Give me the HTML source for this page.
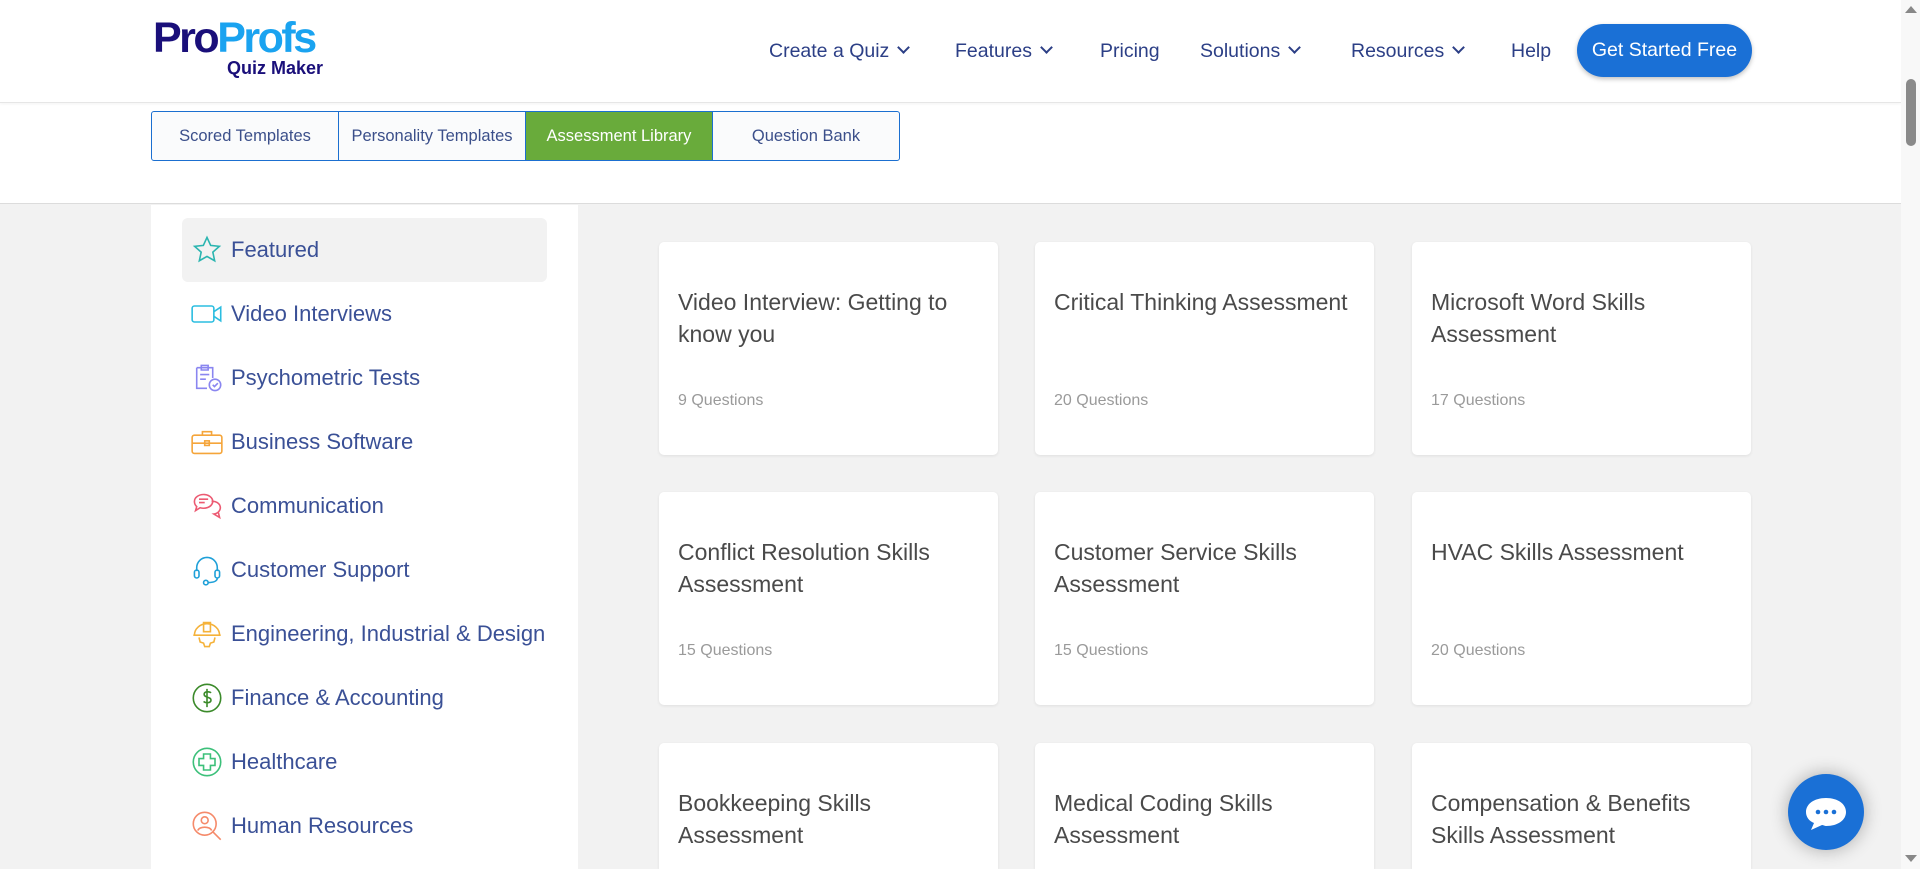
<!DOCTYPE html>
<html><head><meta charset="utf-8"><style>
*{box-sizing:border-box;margin:0;padding:0}
html,body{width:1920px;height:869px;overflow:hidden}
body{background:#f2f2f2;font-family:"Liberation Sans",Arial,sans-serif}
#w{position:relative;width:1920px;height:869px;overflow:hidden;background:#f2f2f2}
.top{position:absolute;left:0;top:0;width:1901px;height:204px;background:#fff;border-bottom:1px solid #dcdcdc}
.hdr{position:absolute;left:0;top:0;width:1901px;height:103px;border-bottom:1px solid #e6e6e6;box-shadow:0 1px 3px rgba(0,0,0,.05)}
.logo{position:absolute;left:153px;top:17px;font-weight:bold;letter-spacing:-2.5px}
.logo .a{font-size:43px;line-height:43px}
.logo .b{position:absolute;left:34px;top:41px;font-size:18px;color:#1a0f7a;letter-spacing:0;white-space:nowrap;width:136px;text-align:right}
.nav{position:absolute;top:40px;font-size:19.5px;color:#2c3f86;white-space:nowrap}
.chev{display:inline-block;width:9px;height:9px;border-right:2px solid #2c3f86;border-bottom:2px solid #2c3f86;transform:rotate(45deg);margin-left:10px;position:relative;top:-5px}
.btn{position:absolute;left:1577px;top:24px;width:175px;height:53px;border-radius:27px;background:#1a70d6;color:#fff;font-size:19.5px;text-align:center;line-height:53px;box-shadow:0 2px 5px rgba(0,0,0,.25)}
.tabs{position:absolute;left:151px;top:111px;width:749px;height:50px;border:1px solid #1b6fd0;border-radius:3px;display:flex;overflow:hidden;background:#fafbfc}
.tabs div{flex:1;text-align:center;line-height:48px;font-size:16.5px;color:#3b4f8a;border-right:1px solid #1b6fd0}
.tabs div:last-child{border-right:none}
.tabs .on{background:#69ab3b;color:#fff}
.side{position:absolute;left:151px;top:205px;width:427px;height:664px;background:#fff}
.it{position:absolute;left:31px;width:365px;height:64px;font-size:22px;color:#3a5096;line-height:64px;padding-left:49px;white-space:nowrap}
.it svg{position:absolute;left:9px;top:16px;width:32px;height:32px;fill:none;stroke-width:1.4}
.it.on{background:#f2f2f2;border-radius:6px;top:13px}
.card{position:absolute;width:339px;height:213px;background:#fff;border-radius:5px;box-shadow:0 1px 3px rgba(0,0,0,.08);padding:44px 19px 0;overflow:hidden}
.card.s{height:126px;border-radius:5px 5px 0 0}
.card h3{font-weight:normal;font-size:23px;line-height:32px;color:#4a4a4a;height:96px}
.card p{font-size:16px;color:#9a9a9a;margin-top:10px}
.sb{position:absolute;right:0;top:0;width:19px;height:869px;background:#f8f8f8}
.chat{position:absolute;left:1788px;top:774px;width:76px;height:76px;border-radius:50%;background:#1a70d6;box-shadow:0 0 18px rgba(0,0,0,.3)}
</style></head><body><div id="w">
<div class="top">
 <div class="hdr">
  <div class="logo"><span class="a"><span style="color:#1a0f7a">Pro</span><span style="color:#1aa3f0">Profs</span></span><div class="b">Quiz Maker</div></div>
  <div class="nav" style="left:769px">Create a Quiz<span class="chev"></span></div>
  <div class="nav" style="left:955px">Features<span class="chev"></span></div>
  <div class="nav" style="left:1100px">Pricing</div>
  <div class="nav" style="left:1200px">Solutions<span class="chev"></span></div>
  <div class="nav" style="left:1351px">Resources<span class="chev"></span></div>
  <div class="nav" style="left:1511px">Help</div>
  <div class="btn">Get Started Free</div>
 </div>
 <div class="tabs"><div>Scored Templates</div><div>Personality Templates</div><div class="on">Assessment Library</div><div>Question Bank</div></div>
</div>
<div class="side">
 <div class="it on"><svg viewBox="0 0 28 28" stroke="#2bb5b0"><path d="M14 3l3.2 7 7.6.8-5.7 5.1 1.6 7.5L14 19.6l-6.7 3.8 1.6-7.5L3.2 10.8l7.6-.8z"/></svg>Featured</div>
 <div class="it" style="top:77px"><svg viewBox="0 0 28 28" stroke="#2bbde0"><rect x="1" y="7" width="19" height="14" rx="2"/><path d="M20 12l6-4v12l-6-4"/></svg>Video Interviews</div>
 <div class="it" style="top:141px"><svg viewBox="0 0 28 28" stroke="#8a86f0"><path d="M5 5h14v9M5 5v18h9M9 3h6v4H9z M8 11h8M8 15h5"/><circle cx="21" cy="20" r="5"/><path d="M19 20l1.5 1.5 3-3"/></svg>Psychometric Tests</div>
 <div class="it" style="top:205px"><svg viewBox="0 0 28 28" stroke="#f5a53a"><rect x="1" y="8" width="26" height="16" rx="2"/><path d="M10 8V5h8v3M1 15h26"/><rect x="12" y="13" width="4" height="4"/></svg>Business Software</div>
 <div class="it" style="top:269px"><svg viewBox="0 0 28 28" stroke="#ec5a72"><path d="M3 10a8 6 0 1 1 5 5.5L4 18l1-3.5A6 6 0 0 1 3 10zM7 8h8M7 11h5"/><path d="M18 10a6 5 0 0 1 2 11l5 3-1-4"/></svg>Communication</div>
 <div class="it" style="top:333px"><svg viewBox="0 0 28 28" stroke="#1fa0d8"><path d="M5 15V12a9 9 0 0 1 18 0v3"/><rect x="3" y="14" width="4" height="7" rx="2"/><rect x="21" y="14" width="4" height="7" rx="2"/><path d="M23 21c0 3-4 4-8 4"/><circle cx="13" cy="25" r="2"/></svg>Customer Support</div>
 <div class="it" style="top:397px"><svg viewBox="0 0 28 28" stroke="#f5b23a"><path d="M3 15a11 10 0 0 1 22 0zM11 4h6v8h-6z M2 15h24"/><path d="M7 17l1 4 3 1 1 3h4l1-3 3-1 1-4"/></svg>Engineering, Industrial &amp; Design</div>
 <div class="it" style="top:461px"><svg viewBox="0 0 28 28" stroke="#3b8a2a"><circle cx="14" cy="14" r="12"/><path d="M17.5 9.5c-1-1.2-6-1.7-6 1.3 0 3 6 2 6 5 0 3-5 2.7-6.5 1.2M14 6v16"/></svg>Finance &amp; Accounting</div>
 <div class="it" style="top:525px"><svg viewBox="0 0 28 28" stroke="#3cc07a"><circle cx="14" cy="14" r="12"/><path d="M11 7h6v4h4v6h-4v4h-6v-4H7v-6h4z"/></svg>Healthcare</div>
 <div class="it" style="top:589px"><svg viewBox="0 0 28 28" stroke="#f58a6a"><circle cx="12" cy="12" r="10"/><circle cx="12" cy="9" r="3"/><path d="M6 18c1-4 11-4 12 0M19 19l7 7"/></svg>Human Resources</div>
</div>
<div class="card" style="left:659px;top:242px"><h3>Video Interview: Getting to know you</h3><p>9 Questions</p></div>
<div class="card" style="left:1035px;top:242px"><h3>Critical Thinking Assessment</h3><p>20 Questions</p></div>
<div class="card" style="left:1412px;top:242px"><h3>Microsoft Word Skills Assessment</h3><p>17 Questions</p></div>
<div class="card" style="left:659px;top:492px"><h3>Conflict Resolution Skills Assessment</h3><p>15 Questions</p></div>
<div class="card" style="left:1035px;top:492px"><h3>Customer Service Skills Assessment</h3><p>15 Questions</p></div>
<div class="card" style="left:1412px;top:492px"><h3>HVAC Skills Assessment</h3><p>20 Questions</p></div>
<div class="card s" style="left:659px;top:743px"><h3>Bookkeeping Skills Assessment</h3></div>
<div class="card s" style="left:1035px;top:743px"><h3>Medical Coding Skills Assessment</h3></div>
<div class="card s" style="left:1412px;top:743px"><h3>Compensation &amp; Benefits Skills Assessment</h3></div>
<div class="chat"><svg width="76" height="76" viewBox="0 0 76 76"><path d="M38 24c-12 0-20 6-20 14 0 5 3 9 8 11l-3 7 11-5c1 0 3 1 4 1 12 0 20-6 20-14s-8-14-20-14z" fill="#fff"/><circle cx="30" cy="38" r="2.3" fill="#1a70d6"/><circle cx="38" cy="38" r="2.3" fill="#1a70d6"/><circle cx="46" cy="38" r="2.3" fill="#1a70d6"/></svg></div>
<div class="sb"><div style="position:absolute;left:4px;top:6px;width:0;height:0;border-left:6px solid transparent;border-right:6px solid transparent;border-bottom:7px solid #888"></div><div style="position:absolute;left:5px;top:79px;width:10px;height:67px;border-radius:5px;background:#8a8a8a"></div><div style="position:absolute;left:4px;top:855px;width:0;height:0;border-left:6px solid transparent;border-right:6px solid transparent;border-top:7px solid #888"></div></div>
</div></body></html>
